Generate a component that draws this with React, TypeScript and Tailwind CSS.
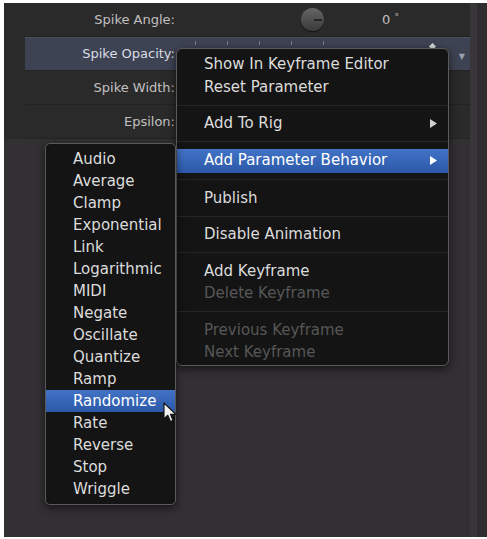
import React from 'react';

type MenuEntry =
  | { kind: 'item'; label: string; disabled?: boolean; active?: boolean; submenu?: boolean }
  | { kind: 'sep' };

const mainMenu: MenuEntry[] = [
  { kind: 'item', label: 'Show In Keyframe Editor' },
  { kind: 'item', label: 'Reset Parameter' },
  { kind: 'sep' },
  { kind: 'item', label: 'Add To Rig', submenu: true },
  { kind: 'sep' },
  { kind: 'item', label: 'Add Parameter Behavior', submenu: true, active: true },
  { kind: 'sep' },
  { kind: 'item', label: 'Publish' },
  { kind: 'sep' },
  { kind: 'item', label: 'Disable Animation' },
  { kind: 'sep' },
  { kind: 'item', label: 'Add Keyframe' },
  { kind: 'item', label: 'Delete Keyframe', disabled: true },
  { kind: 'sep' },
  { kind: 'item', label: 'Previous Keyframe', disabled: true },
  { kind: 'item', label: 'Next Keyframe', disabled: true },
];

const behaviors = [
  'Audio',
  'Average',
  'Clamp',
  'Exponential',
  'Link',
  'Logarithmic',
  'MIDI',
  'Negate',
  'Oscillate',
  'Quantize',
  'Ramp',
  'Randomize',
  'Rate',
  'Reverse',
  'Stop',
  'Wriggle',
];

const Arrow: React.FC<{ color: string }> = ({ color }) => (
  <svg width="7" height="9" viewBox="0 0 7 9">
    <path d="M0 0 L7 4.5 L0 9 Z" fill={color} />
  </svg>
);

const ParamRow: React.FC<{ label: string; selected?: boolean; children?: React.ReactNode }> = ({
  label,
  selected = false,
  children,
}) => (
  <div
    className={`relative flex h-[34px] items-center border-b border-[#242324] ${
      selected ? 'bg-[#3e4353] border-t border-t-[#4a4f5e]' : ''
    }`}
  >
    <div
      className={`w-[150px] text-right text-[13px] ${
        selected ? 'text-[#dadde6]' : 'text-[#c0c0c0]'
      }`}
    >
      {label}
    </div>
    {children}
  </div>
);

const Cursor: React.FC = () => (
  <svg width="15" height="22" viewBox="0 0 15 22" className="absolute left-[159px] top-[399px]">
    <path
      d="M1 1 L1 17 L4.8 13.3 L7.4 19.5 L10 18.4 L7.5 12.3 L12.8 12.3 Z"
      fill="#f2f2f2"
      stroke="#1a1a1a"
      strokeWidth="1.2"
      strokeLinejoin="round"
    />
  </svg>
);

export default function App() {
  return (
    <div className="h-[539px] w-[487px] bg-white pb-[2px] pl-[4px] pt-[3px] font-['DejaVu_Sans',sans-serif]">
      <div className="relative flex h-[534px] bg-[#333033]">
        <div className="flex flex-1 flex-col">
          {/* parameter rows */}
          <div className="bg-[#2b2a2b] pl-[21px]">
            <ParamRow label="Spike Angle:">
              <div className="ml-[126px] flex h-[23px] w-[23px] items-center justify-end rounded-full bg-gradient-to-b from-[#666] to-[#3a3a3a] shadow-[0_1px_1px_rgba(0,0,0,0.6)]">
                <div className="mr-[2px] h-[2px] w-[8px] bg-[#262626]" />
              </div>
              <div className="ml-[58px] text-[13px] text-[#c0c0c0]">
                0 <span className="relative -top-[4px] text-[9px]">°</span>
              </div>
            </ParamRow>
            <ParamRow label="Spike Opacity:" selected>
              <div className="absolute left-[170px] top-[3px] flex gap-[31px]">
                <div className="h-[4px] w-px bg-[#7a7f8c]" />
                <div className="h-[4px] w-px bg-[#7a7f8c]" />
                <div className="h-[4px] w-px bg-[#7a7f8c]" />
                <div className="h-[4px] w-px bg-[#7a7f8c]" />
                <div className="h-[4px] w-px bg-[#7a7f8c]" />
              </div>
              <div className="absolute left-[405px] top-[6px] h-[5px] w-[5px] rotate-45 bg-[#d8d8d8]" />
              <div className="absolute right-[5px] top-[13px] text-[8px] text-[#9aa0b0]">▼</div>
            </ParamRow>
            <ParamRow label="Spike Width:" />
            <ParamRow label="Epsilon:" />
          </div>
          <div className="flex-1" />
        </div>
        <div className="w-[17px] bg-[#2e2c2e]">
          <div className="h-full w-[7px] bg-[#383638]" />
        </div>

        {/* behavior submenu */}
        <div className="absolute left-[41px] top-[140px] z-20 w-[131px] rounded-[5px] border border-[#5a5a5a] bg-[#141414] pb-[4px] pt-[4px] shadow-[0_3px_8px_rgba(0,0,0,0.6)]">
          {behaviors.map((name) => (
            <div
              key={name}
              className={`flex h-[22px] items-center pl-[27px] text-[15px] ${
                name === 'Randomize'
                  ? 'bg-gradient-to-b from-[#4273c6] to-[#2c58a8] text-white'
                  : 'text-[#dcdcdc]'
              }`}
            >
              {name}
            </div>
          ))}
        </div>

        {/* main context menu */}
        <div className="absolute left-[172px] top-[45px] z-10 w-[273px] rounded-[6px] border border-[#5a5a5a] bg-[#141414] pb-[1px] pt-[4px] shadow-[0_3px_10px_rgba(0,0,0,0.6)]">
          {mainMenu.map((entry, idx) =>
            entry.kind === 'sep' ? (
              <div key={idx} className="flex h-[14px] items-center">
                <div className="h-px w-full bg-[#262626]" />
              </div>
            ) : (
              <div
                key={idx}
                className={`flex items-center justify-between pl-[27px] pr-[11px] text-[15px] ${
                  entry.active
                    ? 'h-[24px] bg-gradient-to-b from-[#4273c6] to-[#2c58a8] text-white'
                    : entry.disabled
                    ? 'h-[22.5px] text-[#575757]'
                    : 'h-[22.5px] text-[#dcdcdc]'
                }`}
              >
                <span>{entry.label}</span>
                {entry.submenu && <Arrow color={entry.active ? '#ffffff' : '#cfcfcf'} />}
              </div>
            )
          )}
        </div>

        <div className="z-30">
          <Cursor />
        </div>
      </div>
    </div>
  );
}
